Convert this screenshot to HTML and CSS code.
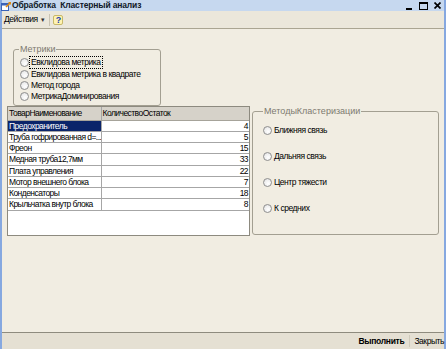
FILE: index.html
```html
<!DOCTYPE html>
<html lang="ru">
<head>
    <meta charset="UTF-8">
    <title>Обработка Кластерный анализ</title>
    <link rel="stylesheet" href="styles.css">
</head>
<body>
    <div class="window">
        <div class="titlebar">
            <svg class="app-icon" width="10" height="10" viewBox="0 0 10 10">
                <rect x="0.5" y="2.5" width="7" height="7" fill="#ffffff" stroke="#3a63b8"/>
                <rect x="0.5" y="2.5" width="7" height="2" fill="#3a63b8"/>
                <path d="M5 6 L9.5 1.5" stroke="#e08a10" stroke-width="1.6"/>
                <path d="M7 1 L10 1 L10 4 Z" fill="#e08a10"/>
            </svg>
            <span class="title">Обработка&nbsp; Кластерный анализ</span>
            <div class="win-buttons">
                <svg width="7" height="8" viewBox="0 0 7 8"><rect x="0" y="6" width="6" height="2" fill="#000"/></svg>
                <svg width="9" height="8" viewBox="0 0 9 8"><rect x="0.5" y="0.5" width="8" height="7" fill="none" stroke="#000"/><rect x="0" y="0" width="9" height="2" fill="#000"/></svg>
                <svg width="7" height="7" viewBox="0 0 7 7"><path d="M0.5 0.5 L6.5 6.5 M6.5 0.5 L0.5 6.5" stroke="#000" stroke-width="1.7"/></svg>
            </div>
        </div>

        <div class="toolbar">
            <span class="menu">Действия</span>
            <span class="caret">▾</span>
            <span class="tb-sep"></span>
            <span class="help">?</span>
        </div>

        <div class="form">
            <fieldset class="group metrics">
                <legend>Метрики</legend>
                <label class="radio first"><span class="dot"></span><span class="focus">Евклидова метрика</span></label>
                <label class="radio"><span class="dot"></span><span>Евклидова метрика в квадрате</span></label>
                <label class="radio"><span class="dot"></span><span>Метод города</span></label>
                <label class="radio"><span class="dot"></span><span>МетрикаДоминирования</span></label>
            </fieldset>

            <div class="row">
                <div class="grid-box">
                    <table class="grid">
                        <thead>
                            <tr><th class="name">ТоварНаименование</th><th>КоличествоОстаток</th></tr>
                        </thead>
                        <tbody>
                            <tr><td class="name selected">Предохранитель</td><td class="num">4</td></tr>
                            <tr><td class="name">Труба гофрированная d=...</td><td class="num">5</td></tr>
                            <tr><td class="name">Фреон</td><td class="num">15</td></tr>
                            <tr><td class="name">Медная труба12,7мм</td><td class="num">33</td></tr>
                            <tr><td class="name">Плата управления</td><td class="num">22</td></tr>
                            <tr><td class="name">Мотор внешнего блока</td><td class="num">7</td></tr>
                            <tr><td class="name">Конденсаторы</td><td class="num">18</td></tr>
                            <tr><td class="name">Крыльчатка внутр блока</td><td class="num">8</td></tr>
                        </tbody>
                    </table>
                </div>

                <fieldset class="group methods">
                    <legend>МетодыКластеризации</legend>
                    <label class="radio"><span class="dot"></span><span>Ближняя связь</span></label>
                    <label class="radio"><span class="dot"></span><span>Дальняя связь</span></label>
                    <label class="radio"><span class="dot"></span><span>Центр тяжести</span></label>
                    <label class="radio"><span class="dot"></span><span>К средних</span></label>
                </fieldset>
            </div>
        </div>

        <div class="footer">
            <span class="button default">Выполнить</span>
            <span class="footer-sep"></span>
            <span class="button">Закрыть</span>
        </div>
    </div>
</body>
</html>
```

FILE: styles.css
```css
* {
    box-sizing: border-box;
}

body {
    margin: 0;
    font-family: "Liberation Sans", Arial, sans-serif;
    font-size: 8.5px;
    letter-spacing: -0.45px;
    color: #000000;
    background: #f1ede2;
}

.window {
    width: 446px;
    height: 349px;
    display: flex;
    flex-direction: column;
    border-left: 2px solid #86a8e0;
    border-right: 2px solid #86a8e0;
    background: #f1ede2;
}

/* заголовок окна */
.titlebar {
    height: 11px;
    display: flex;
    align-items: center;
    background: #c6d8ef;
}

.app-icon {
    margin-left: -1px;
    flex: none;
}

.title {
    margin-left: 1px;
    font-weight: 700;
    font-size: 8.5px;
    letter-spacing: -0.15px;
    line-height: 11px;
    white-space: pre;
    color: #101828;
}

.win-buttons {
    margin-left: auto;
    margin-right: 3px;
    display: flex;
    align-items: center;
    gap: 6px;
}

/* панель действий */
.toolbar {
    height: 18px;
    display: flex;
    align-items: center;
    padding-left: 2px;
    background: #ebe7db;
    border-bottom: 1px solid #aaa592;
}

.menu {
    line-height: 11px;
}

.caret {
    margin-left: 3px;
    font-size: 7px;
    color: #333333;
}

.tb-sep {
    width: 1px;
    height: 12px;
    margin: 0 3px 0 5px;
    background: #c9c4b4;
}

.help {
    width: 10px;
    height: 10px;
    display: flex;
    align-items: center;
    justify-content: center;
    font-weight: 700;
    font-size: 9px;
    color: #1a3fb0;
    background: #fff3b0;
    border: 1px solid #c8b86a;
    border-radius: 2px;
}

/* форма */
.form {
    flex: 1;
    padding: 15px 0 0 5px;
}

.group {
    margin: 0;
    padding: 0 0 0 5px;
    border: 1px solid #a39f91;
    border-radius: 3px;
}

.group legend {
    padding: 0 1px;
    font-size: 9px;
    letter-spacing: 0;
    line-height: 11px;
    color: #7d7a70;
}

.radio {
    display: flex;
    align-items: center;
    height: 11px;
    line-height: 11px;
    white-space: nowrap;
}

.dot {
    width: 9px;
    height: 9px;
    margin-right: 2px;
    flex: none;
    border: 1px solid #8f8f8f;
    border-radius: 50%;
    background: radial-gradient(circle at 60% 65%, #ffffff 0%, #eeeeee 60%, #d2d2d2 100%);
}

.focus {
    outline: 1px dotted #000000;
    outline-offset: 0;
    padding: 0 1px;
    margin-left: -1px;
}

.metrics {
    width: 148px;
    margin-left: 6px;
    padding-bottom: 3px;
}

.metrics .radio {
    margin-left: 1px;
}

.metrics .radio.first {
    margin-top: 2px;
    margin-bottom: 1px;
}

.row {
    display: flex;
    align-items: flex-start;
    gap: 2px;
}

/* таблица */
.grid-box {
    width: 243px;
    height: 130px;
    background: #ffffff;
    border: 1px solid #8d8a7f;
}

.grid {
    width: 100%;
    border-collapse: collapse;
    table-layout: fixed;
    letter-spacing: -0.55px;
}

.grid th,
.grid td {
    padding: 0 1px;
    font-weight: 400;
    text-align: left;
    white-space: nowrap;
    overflow: hidden;
    border-right: 1px solid #a6a6a6;
}

.grid th {
    height: 13px;
    line-height: 12px;
    background: #d6d2c9;
    border-bottom: 1px solid #a6a39a;
}

.grid th.name,
.grid td.name {
    width: 93px;
}

.grid td {
    height: 11.25px;
    line-height: 10px;
    border-bottom: 1px solid #a6a6a6;
}

.grid td.num {
    text-align: right;
    border-right: none;
}

.grid th:last-child {
    border-right: none;
}

.grid td.selected {
    color: #ffffff;
    background: #0a246a;
}

.methods {
    width: 187px;
    height: 129px;
    display: flex;
    flex-direction: column;
    gap: 14px;
    padding-top: 7px;
    padding-left: 10px;
}

.methods .radio {
    height: 12px;
}

/* нижняя панель */
.footer {
    height: 17px;
    display: flex;
    align-items: center;
    justify-content: flex-end;
    padding-right: 0;
    background: #e5e0d3;
    border-top: 1px solid #8e8b7e;
}

.button {
    line-height: 12px;
}

.button.default {
    font-weight: 700;
    letter-spacing: -0.3px;
}

.footer-sep {
    width: 1px;
    height: 12px;
    margin: 0 4px 0 5px;
    background: #cfcabb;
}
```
